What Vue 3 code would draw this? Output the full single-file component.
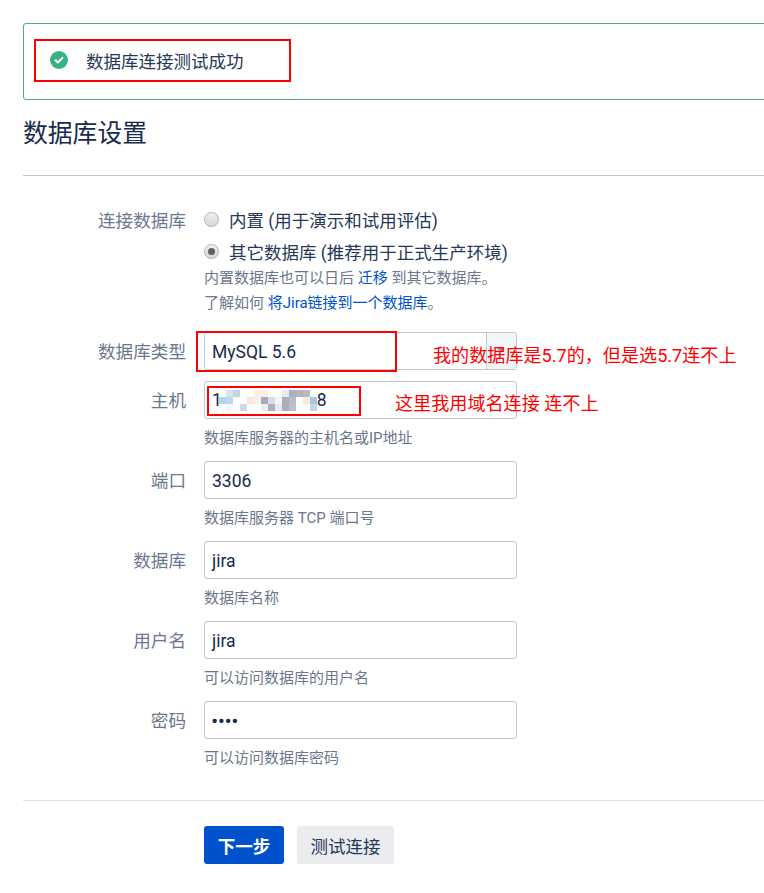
<script setup>
const fields = [
  { label: '端口', value: '3306', hint: '数据库服务器 TCP 端口号' },
  { label: '数据库', value: 'jira', hint: '数据库名称' },
  { label: '用户名', value: 'jira', hint: '可以访问数据库的用户名' },
  { label: '密码', value: '••••', hint: '可以访问数据库密码', secret: true }
]
const mosaicColors = [
  '#fff', '#d5e4f0', '#c6d3e2', '#fff', '#fff', '#fbeee6', '#fbeee6', '#fff', '#fff', '#e6eaf2', '#a9b2c4', '#b4b4c2', '#b8b8c6', '#fff',
  '#b5d3ea', '#bcd8ee', '#fff', '#fff', '#fbe6d8', '#fbf0ea', '#a9a9b9', '#d8dde6', '#f0f3f8', '#a9aebd', '#b9bcc8', '#fff', '#fbeadc', '#a9c6e2',
  '#fff', '#f4f6fa', '#fff', '#d3d6e6', '#fff', '#fff', '#eceef2', '#aeb0bc', '#e8eaf0', '#a9aebd', '#bcbfca', '#fff', '#fff', '#c2d6ea'
]
</script>

<template>
  <div class="page">
    <div class="alert">
      <svg class="check" viewBox="0 0 18 18" width="18" height="18">
        <circle cx="9" cy="9" r="9" fill="#36b37e" />
        <path d="M5.5 9.2l2.4 2.3 4.6-4.6" fill="none" stroke="#fff" stroke-width="2" stroke-linecap="round" stroke-linejoin="round" />
      </svg>
      <span>数据库连接测试成功</span>
    </div>

    <h1 class="title">数据库设置</h1>
    <hr class="rule" />

    <div class="row radios">
      <div class="label">连接数据库</div>
      <div class="control">
        <div class="radio-line">
          <span class="radio"></span>
          <span class="radio-text">内置 (用于演示和试用评估)</span>
        </div>
        <div class="radio-line second">
          <span class="radio on"></span>
          <span class="radio-text">其它数据库 (推荐用于正式生产环境)</span>
        </div>
        <div class="note">内置数据库也可以日后 <a>迁移</a> 到其它数据库。</div>
        <div class="note two">了解如何 <a>将Jira链接到一个数据库</a>。</div>
      </div>
    </div>

    <div class="row type-row">
      <div class="label">数据库类型</div>
      <div class="control">
        <div class="select">
          <span class="select-value">MySQL 5.6</span>
          <span class="select-arrow"></span>
        </div>
      </div>
    </div>

    <div class="row host-row">
      <div class="label">主机</div>
      <div class="control">
        <div class="input host">
          <span>1</span>
          <span class="mosaic">
            <i v-for="(c, i) in mosaicColors" :key="i" :style="{ background: c }"></i>
          </span>
          <span>8</span>
        </div>
        <div class="hint">数据库服务器的主机名或IP地址</div>
      </div>
    </div>

    <div v-for="f in fields" :key="f.label" class="row field">
      <div class="label">{{ f.label }}</div>
      <div class="control">
        <div class="input" :class="{ secret: f.secret }">{{ f.value }}</div>
        <div class="hint">{{ f.hint }}</div>
      </div>
    </div>

    <hr class="rule foot" />

    <div class="buttons">
      <button class="primary">下一步</button>
      <button class="secondary">测试连接</button>
    </div>

    <div class="mark mark-alert"></div>
    <div class="mark mark-type"></div>
    <div class="mark mark-host"></div>
    <div class="annotation note-type">我的数据库是5.7的，但是选5.7连不上</div>
    <div class="annotation note-host">这里我用域名连接 连不上</div>
  </div>
</template>

<style>
html, body { margin: 0; background: #fff; }
</style>

<style scoped>
.page {
  position: relative;
  width: 764px;
  height: 893px;
  overflow: hidden;
  box-sizing: border-box;
  padding: 23px 0 0 23px;
  background: #fff;
  color: #172b4d;
  font-family: Roboto, "Noto Sans CJK SC", sans-serif;
  font-size: 17.5px;
}
.alert {
  width: 800px;
  height: 77px;
  box-sizing: border-box;
  border: 1px solid #4da987;
  border-radius: 3px;
  padding: 0 0 0 26px;
  display: flex;
  align-items: center;
  gap: 18px;
  line-height: 78px;
  color: #253858;
}
.check { flex: none; margin-top: -3px; }
.title {
  margin: 17px 0 0;
  height: 33px;
  font-size: 24.8px;
  line-height: 33px;
  font-weight: 400;
  color: #172b4d;
}
.rule {
  width: 800px;
  margin: 25px 0 0;
  border: 0;
  border-top: 1px solid #c1c7d0;
}
.row { display: flex; gap: 18px; }
.label {
  width: 163px;
  height: 38px;
  flex: none;
  text-align: right;
  color: #6b778c;
  font-size: 17.6px;
  line-height: 40px;
}
.control { width: 313px; flex: none; }
.radios { margin-top: 25px; }
.radios .control { width: 400px; }
.radio-line { display: flex; align-items: center; height: 38px; gap: 10px; }
.radio-line.second { height: 26px; margin-top: 0; }
.radio {
  width: 15px;
  height: 15px;
  box-sizing: border-box;
  border-radius: 50%;
  border: 1px solid #b3b3b3;
  background: linear-gradient(#f0f0f0, #d6d6d6);
  position: relative;
  flex: none;
  margin-top: -2px;
}
.radio.on::after {
  content: "";
  position: absolute;
  left: 3px;
  top: 3px;
  width: 7px;
  height: 7px;
  border-radius: 50%;
  background: #5f5f5f;
}
.radio-text { color: #253858; margin-top: -2px; }
.note { font-size: 15px; line-height: 20px; color: #6b778c; margin-top: 3px; }
.note.two { margin-top: 5px; }
.note a { color: #0052cc; }
.type-row { margin-top: 19px; }
.select, .input {
  width: 313px;
  height: 38px;
  box-sizing: border-box;
  border: 1px solid #c1c7d0;
  border-radius: 3px;
  background: #fff;
  color: #172b4d;
  line-height: 38px;
  padding: 0 7px;
}
.select { display: flex; padding-right: 0; overflow: hidden; }
.select-value { flex: 1; }
.select-arrow {
  width: 29px;
  border-left: 1px solid #c1c7d0;
  background: #f4f5f7;
  position: relative;
}
.select-arrow::after {
  content: "";
  position: absolute;
  left: 10px;
  top: 15px;
  border-left: 4px solid transparent;
  border-right: 4px solid transparent;
  border-top: 4px solid #8993a4;
}
.host-row { margin-top: 11px; }
.host { display: flex; align-items: center; }
.mosaic {
  width: 98px;
  height: 21px;
  display: grid;
  grid-template-columns: repeat(14, 1fr);
  grid-template-rows: repeat(3, 1fr);
  flex: none;
  margin-left: -3px;
}
.hint {
  font-size: 15px;
  line-height: 20px;
  color: #6b778c;
  margin-top: 9px;
  height: 19px;
}
.field { margin-top: 14px; }
.secret {
  font-family: "Liberation Sans", sans-serif;
  font-size: 15px;
  font-weight: 700;
  letter-spacing: 1.5px;
}
.foot { margin-top: 33px; border-top-color: #dfe1e6; }
.buttons { margin: 25px 0 0 181px; display: flex; gap: 13px; }
button {
  height: 38px;
  border: 0;
  border-radius: 3px;
  padding: 0;
  font: inherit;
  cursor: pointer;
}
.primary { width: 80px; background: #0052cc; color: #fff; font-weight: 700; }
.secondary { width: 97px; background: #ebecf0; color: #253858; }
.mark {
  position: absolute;
  box-sizing: border-box;
  border: 2px solid #f00;
}
.mark-alert { left: 34px; top: 39px; width: 257px; height: 43px; }
.mark-type { left: 196px; top: 331px; width: 201px; height: 41px; }
.mark-host { left: 207px; top: 386px; width: 154px; height: 30px; }
.annotation {
  position: absolute;
  color: #f00;
  font-size: 18.1px;
  line-height: 24px;
  white-space: nowrap;
}
.note-type { left: 433px; top: 344px; }
.note-host { left: 395px; top: 392px; }
</style>
